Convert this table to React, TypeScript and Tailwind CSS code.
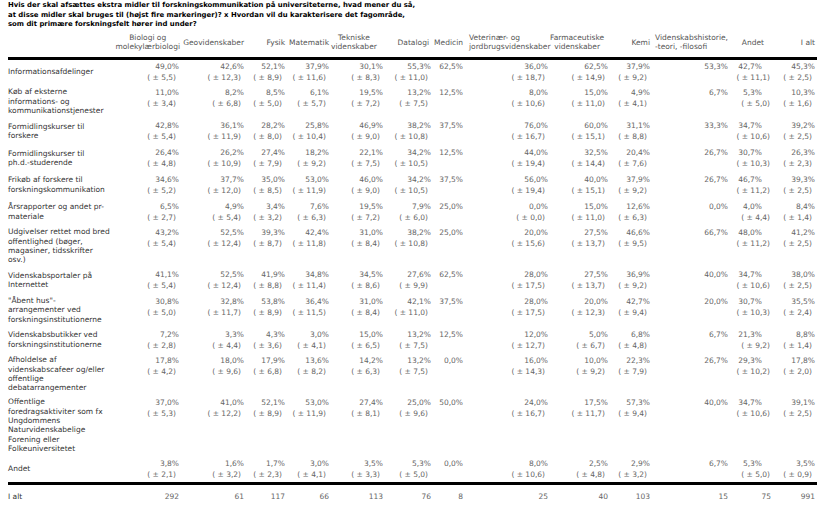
import React from "react"

type Row = { label: string[]; pct: string[]; pm: (string | null)[] }

const colW = [
  "w-[106px]",
  "w-[67px]",
  "w-[65px]",
  "w-[41px]",
  "w-[44px]",
  "w-[54px]",
  "w-[48px]",
  "w-[32px]",
  "w-[85px]",
  "w-[60px]",
  "w-[42px]",
  "w-[78px]",
  "w-[34px]",
  "w-[53px]",
]

// th padding keeps the header block where the reference has it
const headers: { lines: string[]; cls: string }[] = [
  { lines: ["Biologi og", "molekylærbiologi"], cls: "text-right pr-px" },
  { lines: ["Geovidenskaber"], cls: "text-right pr-[2px]" },
  { lines: ["Fysik"], cls: "text-right pr-[2px]" },
  { lines: ["Matematik"], cls: "text-right pr-[2px]" },
  { lines: ["Tekniske", "videnskaber"], cls: "text-right pr-[11px]" },
  { lines: ["Datalogi"], cls: "text-right pr-[4px]" },
  { lines: ["Medicin"], cls: "text-right pr-[2px]" },
  { lines: ["Veterinær- og", "jordbrugsvidenskaber"], cls: "text-left pl-[4px]" },
  { lines: ["Farmaceutiske", "videnskaber"], cls: "text-right pr-[9px]" },
  { lines: ["Kemi"], cls: "text-right pr-[2px]" },
  { lines: ["Videnskabshistorie,", "-teori, -filosofi"], cls: "text-left pl-[3px]" },
  { lines: ["Andet"], cls: "text-right -mr-[3px]" },
  { lines: ["I alt"], cls: "text-right pr-[2px]" },
]

const rows: Row[] = [
  {
    label: ["Informationsafdelinger"],
    pct: ["49,0", "42,6", "52,1", "37,9", "30,1", "55,3", "62,5", "36,0", "62,5", "37,9", "53,3", "42,7", "45,3"],
    pm: ["5,5", "12,3", "8,9", "11,6", "8,3", "11,0", null, "18,7", "14,9", "9,2", null, "11,1", "2,5"],
  },
  {
    label: ["Køb af eksterne", "informations- og", "kommunikationstjenester"],
    pct: ["11,0", "8,2", "8,5", "6,1", "19,5", "13,2", "12,5", "8,0", "15,0", "4,9", "6,7", "5,3", "10,3"],
    pm: ["3,4", "6,8", "5,0", "5,7", "7,2", "7,5", null, "10,6", "11,0", "4,1", null, "5,0", "1,6"],
  },
  {
    label: ["Formidlingskurser til", "forskere"],
    pct: ["42,8", "36,1", "28,2", "25,8", "46,9", "38,2", "37,5", "76,0", "60,0", "31,1", "33,3", "34,7", "39,2"],
    pm: ["5,4", "11,9", "8,0", "10,4", "9,0", "10,8", null, "16,7", "15,1", "8,8", null, "10,6", "2,5"],
  },
  {
    label: ["Formidlingskurser til", "ph.d.-studerende"],
    pct: ["26,4", "26,2", "27,4", "18,2", "22,1", "34,2", "12,5", "44,0", "32,5", "20,4", "26,7", "30,7", "26,3"],
    pm: ["4,8", "10,9", "7,9", "9,2", "7,5", "10,5", null, "19,4", "14,4", "7,6", null, "10,3", "2,3"],
  },
  {
    label: ["Frikøb af forskere til", "forskningskommunikation"],
    pct: ["34,6", "37,7", "35,0", "53,0", "46,0", "34,2", "37,5", "56,0", "40,0", "37,9", "26,7", "46,7", "39,3"],
    pm: ["5,2", "12,0", "8,5", "11,9", "9,0", "10,5", null, "19,4", "15,1", "9,2", null, "11,2", "2,5"],
  },
  {
    label: ["Årsrapporter og andet pr-", "materiale"],
    pct: ["6,5", "4,9", "3,4", "7,6", "19,5", "7,9", "25,0", "0,0", "15,0", "12,6", "0,0", "4,0", "8,4"],
    pm: ["2,7", "5,4", "3,2", "6,3", "7,2", "6,0", null, "0,0", "11,0", "6,3", null, "4,4", "1,4"],
  },
  {
    label: ["Udgivelser rettet mod bred", "offentlighed (bøger,", "magasiner, tidsskrifter", "osv.)"],
    pct: ["43,2", "52,5", "39,3", "42,4", "31,0", "38,2", "25,0", "20,0", "27,5", "46,6", "66,7", "48,0", "41,2"],
    pm: ["5,4", "12,4", "8,7", "11,8", "8,4", "10,8", null, "15,6", "13,7", "9,5", null, "11,2", "2,5"],
  },
  {
    label: ["Videnskabsportaler på", "Internettet"],
    pct: ["41,1", "52,5", "41,9", "34,8", "34,5", "27,6", "62,5", "28,0", "27,5", "36,9", "40,0", "34,7", "38,0"],
    pm: ["5,4", "12,4", "8,8", "11,4", "8,6", "9,9", null, "17,5", "13,7", "9,2", null, "10,6", "2,5"],
  },
  {
    label: ["\"Åbent hus\"-", "arrangementer ved", "forskningsinstitutionerne"],
    pct: ["30,8", "32,8", "53,8", "36,4", "31,0", "42,1", "37,5", "28,0", "20,0", "42,7", "20,0", "30,7", "35,5"],
    pm: ["5,0", "11,7", "8,9", "11,5", "8,4", "11,0", null, "17,5", "12,3", "9,4", null, "10,3", "2,4"],
  },
  {
    label: ["Videnskabsbutikker ved", "forskningsinstitutionerne"],
    pct: ["7,2", "3,3", "4,3", "3,0", "15,0", "13,2", "12,5", "12,0", "5,0", "6,8", "6,7", "21,3", "8,8"],
    pm: ["2,8", "4,4", "3,6", "4,1", "6,5", "7,5", null, "12,7", "6,7", "4,8", null, "9,2", "1,4"],
  },
  {
    label: ["Afholdelse af", "videnskabscafeer og/eller", "offentlige", "debatarrangementer"],
    pct: ["17,8", "18,0", "17,9", "13,6", "14,2", "13,2", "0,0", "16,0", "10,0", "22,3", "26,7", "29,3", "17,8"],
    pm: ["4,2", "9,6", "6,8", "8,2", "6,3", "7,5", null, "14,3", "9,2", "7,9", null, "10,2", "2,0"],
  },
  {
    label: [
      "Offentlige",
      "foredragsaktiviter som fx",
      "Ungdommens",
      "Naturvidenskabelige",
      "Forening eller",
      "Folkeuniversitetet",
    ],
    pct: ["37,0", "41,0", "52,1", "53,0", "27,4", "25,0", "50,0", "24,0", "17,5", "57,3", "40,0", "34,7", "39,1"],
    pm: ["5,3", "12,2", "8,9", "11,9", "8,1", "9,6", null, "16,7", "11,7", "9,4", null, "10,6", "2,5"],
  },
  {
    label: ["Andet"],
    pct: ["3,8", "1,6", "1,7", "3,0", "3,5", "5,3", "0,0", "8,0", "2,5", "2,9", "6,7", "5,3", "3,5"],
    pm: ["2,1", "3,2", "2,3", "4,1", "3,3", "5,0", null, "10,6", "4,8", "3,2", null, "5,0", "0,9"],
  },
]

const totals = ["292", "61", "117", "66", "113", "76", "8", "25", "40", "103", "15", "75", "991"]

const Cols = () => (
  <colgroup>
    {colW.map((w, i) => (
      <col key={i} className={w} />
    ))}
  </colgroup>
)

const Rule = () => <div className="h-[3px] w-[809px] bg-black" />

export default function App() {
  return (
    <div className="w-[829px] h-[512px] overflow-hidden bg-white pl-2 font-['DejaVu_Sans',Verdana,sans-serif] text-[7.5px] text-[#333]">
      <div className="pt-px text-[6.9px] font-bold leading-[9.7px] text-black">
        Hvis der skal afsættes ekstra midler til forskningskommunikation på universiteterne, hvad mener du så,
        <br />
        at disse midler skal bruges til (højst fire markeringer)? x Hvordan vil du karakterisere det fagområde,
        <br />
        som dit primære forskningsfelt hører ind under?
      </div>

      <table className="mt-[3px] w-[809px] table-fixed border-separate border-spacing-0">
        <Cols />
        <thead>
          <tr>
            <th className="pb-[5px]" />
            {headers.map((h, i) => (
              <th
                key={i}
                className={`pb-[5px] align-middle whitespace-nowrap font-normal leading-[9.3px] text-[#555] ${h.cls}`}
              >
                <div className="inline-block text-center">
                  {h.lines.map((l, j) => (
                    <div key={j} className={i === 7 || i === 10 ? "text-left" : ""}>
                      {l}
                    </div>
                  ))}
                </div>
              </th>
            ))}
          </tr>
        </thead>
      </table>

      <Rule />

      <table className="w-[809px] table-fixed border-separate border-spacing-0">
        <Cols />
        <tbody>
          {rows.map((r, ri) => (
            <tr key={ri}>
              <td
                className={`align-middle whitespace-nowrap leading-[9.3px] pb-[2.4px] ${
                  ri === 0 ? "pt-[1px]" : "pt-[2.4px]"
                }`}
              >
                {r.label.map((l, j) => (
                  <div key={j}>{l}</div>
                ))}
              </td>
              {r.pct.map((p, ci) => (
                <td
                  key={ci}
                  className={`align-top whitespace-nowrap pr-[2px] text-right text-[#666] pb-[2.4px] ${
                    ri === 0 ? "pt-[1px]" : "pt-[2.4px]"
                  }`}
                >
                  <div className="leading-[11px]">{p}%</div>
                  {r.pm[ci] && (
                    <div className={`leading-[11px] ${ci === 11 ? "-mr-[8px]" : "pr-[3px]"}`}>
                      ( ± {r.pm[ci]})
                    </div>
                  )}
                </td>
              ))}
            </tr>
          ))}
        </tbody>
      </table>

      <Rule />

      <table className="w-[809px] table-fixed border-separate border-spacing-0">
        <Cols />
        <tbody>
          <tr>
            <td className="pt-[6px] leading-[11px]">I alt</td>
            {totals.map((t, i) => (
              <td
                key={i}
                className={`pt-[6px] text-right leading-[11px] text-[#666] ${i === 11 ? "pr-0" : "pr-[2px]"}`}
              >
                {i === 11 ? <span className="relative left-[7px]">{t}</span> : t}
              </td>
            ))}
          </tr>
        </tbody>
      </table>
    </div>
  )
}
